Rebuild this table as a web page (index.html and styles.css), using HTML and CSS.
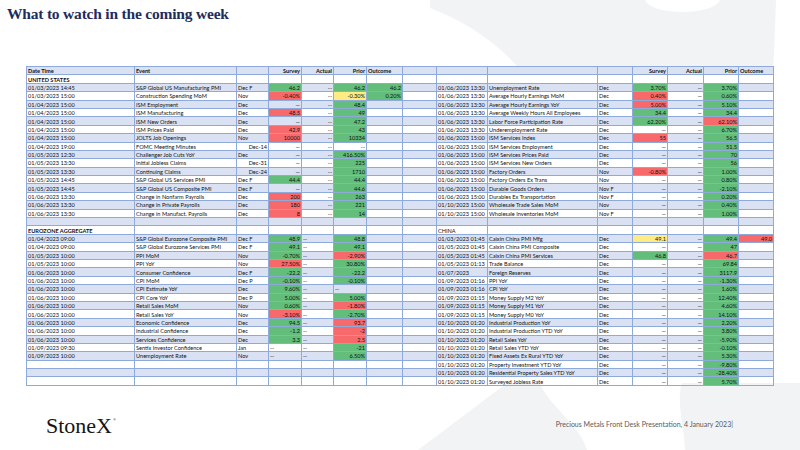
FILE: index.html
```html
<!DOCTYPE html>
<html lang="en">
<head>
<meta charset="utf-8">
<title>What to watch in the coming week</title>
<link rel="stylesheet" href="styles.css">
</head>
<body>
<h1 class="title">What to watch in the coming week</h1>
<table class="cal">
<colgroup>
<col style="width:108px"><col style="width:102px"><col style="width:32px"><col style="width:33px"><col style="width:32px"><col style="width:33px"><col style="width:36px"><col style="width:34px"><col style="width:51px"><col style="width:110px"><col style="width:35px"><col style="width:35px"><col style="width:36px"><col style="width:35px"><col style="width:35px">
</colgroup>
<tbody>
<tr class="h"><td>Date Time</td><td>Event</td><td></td><td>Survey</td><td>Actual</td><td>Prior</td><td class="l">Outcome</td><td></td><td></td><td></td><td></td><td>Survey</td><td>Actual</td><td>Prior</td><td class="l">Outcome</td></tr>
<tr><td class="b">UNITED STATES</td><td></td><td></td><td></td><td></td><td></td><td></td><td></td><td></td><td></td><td></td><td></td><td></td><td></td><td></td></tr>
<tr><td>01/03/2023 14:45</td><td>S&amp;P Global US Manufacturing PMI</td><td>Dec F</td><td class="g">46.2</td><td>--</td><td class="g">46.2</td><td class="g">46.2</td><td></td><td>01/06/2023 13:30</td><td>Unemployment Rate</td><td>Dec</td><td class="g">3.70%</td><td>—</td><td class="g">3.70%</td><td></td></tr>
<tr><td>01/03/2023 15:00</td><td>Construction Spending MoM</td><td>Nov</td><td class="r">-0.40%</td><td>--</td><td class="y">-0.30%</td><td class="g">0.20%</td><td></td><td>01/06/2023 13:30</td><td>Average Hourly Earnings MoM</td><td>Dec</td><td class="r">0.40%</td><td>—</td><td class="g">0.60%</td><td></td></tr>
<tr><td>01/04/2023 15:00</td><td>ISM Employment</td><td>Dec</td><td>—</td><td>--</td><td class="g">48.4</td><td></td><td></td><td>01/06/2023 13:30</td><td>Average Hourly Earnings YoY</td><td>Dec</td><td class="r">5.00%</td><td>—</td><td class="g">5.10%</td><td></td></tr>
<tr><td>01/04/2023 15:00</td><td>ISM Manufacturing</td><td>Dec</td><td class="r">48.5</td><td>--</td><td class="g">49</td><td></td><td></td><td>01/06/2023 13:30</td><td>Average Weekly Hours All Employees</td><td>Dec</td><td class="g">34.4</td><td>—</td><td class="g">34.4</td><td></td></tr>
<tr><td>01/04/2023 15:00</td><td>ISM New Orders</td><td>Dec</td><td>—</td><td>--</td><td class="g">47.2</td><td></td><td></td><td>01/06/2023 13:30</td><td>Labor Force Participation Rate</td><td>Dec</td><td class="g">62.20%</td><td>—</td><td class="r">62.10%</td><td></td></tr>
<tr><td>01/04/2023 15:00</td><td>ISM Prices Paid</td><td>Dec</td><td class="r">42.9</td><td>--</td><td class="g">43</td><td></td><td></td><td>01/06/2023 13:30</td><td>Underemployment Rate</td><td>Dec</td><td>—</td><td>—</td><td class="g">6.70%</td><td></td></tr>
<tr><td>01/04/2023 15:00</td><td>JOLTS Job Openings</td><td>Nov</td><td class="r">10000</td><td>--</td><td class="g">10334</td><td></td><td></td><td>01/06/2023 15:00</td><td>ISM Services Index</td><td>Dec</td><td class="r">55</td><td>—</td><td class="g">56.5</td><td></td></tr>
<tr><td>01/04/2023 19:00</td><td>FOMC Meeting Minutes</td><td class="n">Dec-14</td><td>—</td><td>--</td><td>--</td><td></td><td></td><td>01/06/2023 15:00</td><td>ISM Services Employment</td><td>Dec</td><td>—</td><td>—</td><td class="g">51.5</td><td></td></tr>
<tr><td>01/05/2023 12:30</td><td>Challenger Job Cuts YoY</td><td>Dec</td><td>—</td><td>--</td><td class="g">416.50%</td><td></td><td></td><td>01/06/2023 15:00</td><td>ISM Services Prices Paid</td><td>Dec</td><td>—</td><td>—</td><td class="g">70</td><td></td></tr>
<tr><td>01/05/2023 13:30</td><td>Initial Jobless Claims</td><td class="n">Dec-31</td><td>—</td><td>--</td><td class="g">225</td><td></td><td></td><td>01/06/2023 15:00</td><td>ISM Services New Orders</td><td>Dec</td><td>—</td><td>—</td><td class="g">56</td><td></td></tr>
<tr><td>01/05/2023 13:30</td><td>Continuing Claims</td><td class="n">Dec-24</td><td>—</td><td>--</td><td class="g">1710</td><td></td><td></td><td>01/06/2023 15:00</td><td>Factory Orders</td><td>Nov</td><td class="r">-0.80%</td><td>—</td><td class="g">1.00%</td><td></td></tr>
<tr><td>01/05/2023 14:45</td><td>S&amp;P Global US Services PMI</td><td>Dec F</td><td class="g">44.4</td><td>--</td><td class="g">44.4</td><td></td><td></td><td>01/06/2023 15:00</td><td>Factory Orders Ex Trans</td><td>Nov</td><td>—</td><td>—</td><td class="g">0.80%</td><td></td></tr>
<tr><td>01/05/2023 14:45</td><td>S&amp;P Global US Composite PMI</td><td>Dec F</td><td>—</td><td>--</td><td class="g">44.6</td><td></td><td></td><td>01/06/2023 15:00</td><td>Durable Goods Orders</td><td>Nov F</td><td>—</td><td>—</td><td class="g">-2.10%</td><td></td></tr>
<tr><td>01/06/2023 13:30</td><td>Change in Nonfarm Payrolls</td><td>Dec</td><td class="r">200</td><td>--</td><td class="g">263</td><td></td><td></td><td>01/06/2023 15:00</td><td>Durables Ex Transportation</td><td>Nov F</td><td>—</td><td>—</td><td class="g">0.20%</td><td></td></tr>
<tr><td>01/06/2023 13:30</td><td>Change in Private Payrolls</td><td>Dec</td><td class="r">180</td><td>--</td><td class="g">221</td><td></td><td></td><td>01/10/2023 15:00</td><td>Wholesale Trade Sales MoM</td><td>Nov</td><td>—</td><td>—</td><td class="g">0.40%</td><td></td></tr>
<tr><td>01/06/2023 13:30</td><td>Change in Manufact. Payrolls</td><td>Dec</td><td class="r">8</td><td>--</td><td class="g">14</td><td></td><td></td><td>01/10/2023 15:00</td><td>Wholesale Inventories MoM</td><td>Nov F</td><td>—</td><td>—</td><td class="g">1.00%</td><td></td></tr>
<tr><td></td><td></td><td></td><td></td><td></td><td></td><td></td><td></td><td></td><td></td><td></td><td></td><td></td><td></td><td></td></tr>
<tr><td class="b">EUROZONE AGGREGATE</td><td></td><td></td><td></td><td></td><td></td><td></td><td></td><td>CHINA</td><td></td><td></td><td></td><td></td><td></td><td></td></tr>
<tr><td>01/04/2023 09:00</td><td>S&amp;P Global Eurozone Composite PMI</td><td>Dec F</td><td class="g">48.9</td><td class="l">--</td><td class="g">48.8</td><td></td><td></td><td>01/03/2023 01:45</td><td>Caixin China PMI Mfg</td><td>Dec</td><td class="y">49.1</td><td>—</td><td class="g">49.4</td><td class="r">49.0</td></tr>
<tr><td>01/04/2023 09:00</td><td>S&amp;P Global Eurozone Services PMI</td><td>Dec F</td><td class="g">49.1</td><td class="l">--</td><td class="g">49.1</td><td></td><td></td><td>01/05/2023 01:45</td><td>Caixin China PMI Composite</td><td>Dec</td><td>—</td><td>—</td><td class="g">47</td><td></td></tr>
<tr><td>01/05/2023 10:00</td><td>PPI MoM</td><td>Nov</td><td class="g">-0.70%</td><td class="l">--</td><td class="r">-2.90%</td><td></td><td></td><td>01/05/2023 01:45</td><td>Caixin China PMI Services</td><td>Dec</td><td class="g">46.8</td><td>—</td><td class="r">46.7</td><td></td></tr>
<tr><td>01/05/2023 10:00</td><td>PPI YoY</td><td>Nov</td><td class="r">27.50%</td><td class="l">--</td><td class="g">30.80%</td><td></td><td></td><td>01/05/2023 01:13</td><td>Trade Balance</td><td>Dec</td><td>—</td><td>—</td><td class="g">69.84</td><td></td></tr>
<tr><td>01/06/2023 10:00</td><td>Consumer Confidence</td><td>Dec F</td><td class="g">-22.2</td><td class="l">--</td><td class="g">-22.2</td><td></td><td></td><td>01/07/2023</td><td>Foreign Reserves</td><td>Dec</td><td>—</td><td>—</td><td class="g">3117.9</td><td></td></tr>
<tr><td>01/06/2023 10:00</td><td>CPI MoM</td><td>Dec P</td><td class="g">-0.10%</td><td class="l">--</td><td class="g">-0.10%</td><td></td><td></td><td>01/09/2023 01:16</td><td>PPI YoY</td><td>Dec</td><td>—</td><td>—</td><td class="g">-1.30%</td><td></td></tr>
<tr><td>01/06/2023 10:00</td><td>CPI Estimate YoY</td><td>Dec</td><td class="g">9.60%</td><td class="l">--</td><td class="l">--</td><td></td><td></td><td>01/09/2023 01:16</td><td>CPI YoY</td><td>Dec</td><td>—</td><td>—</td><td class="g">1.60%</td><td></td></tr>
<tr><td>01/06/2023 10:00</td><td>CPI Core YoY</td><td>Dec P</td><td class="g">5.00%</td><td class="l">--</td><td class="g">5.00%</td><td></td><td></td><td>01/09/2023 01:15</td><td>Money Supply M2 YoY</td><td>Dec</td><td>—</td><td>—</td><td class="g">12.40%</td><td></td></tr>
<tr><td>01/06/2023 10:00</td><td>Retail Sales MoM</td><td>Nov</td><td class="g">0.60%</td><td class="l">--</td><td class="r">-1.80%</td><td></td><td></td><td>01/09/2023 01:15</td><td>Money Supply M1 YoY</td><td>Dec</td><td>—</td><td>—</td><td class="g">4.60%</td><td></td></tr>
<tr><td>01/06/2023 10:00</td><td>Retail Sales YoY</td><td>Nov</td><td class="r">-3.10%</td><td class="l">--</td><td class="g">-2.70%</td><td></td><td></td><td>01/09/2023 01:15</td><td>Money Supply M0 YoY</td><td>Dec</td><td>—</td><td>—</td><td class="g">14.10%</td><td></td></tr>
<tr><td>01/06/2023 10:00</td><td>Economic Confidence</td><td>Dec</td><td class="g">94.5</td><td class="l">--</td><td class="r">93.7</td><td></td><td></td><td>01/10/2023 01:20</td><td>Industrial Production YoY</td><td>Dec</td><td>—</td><td>—</td><td class="g">2.20%</td><td></td></tr>
<tr><td>01/06/2023 10:00</td><td>Industrial Confidence</td><td>Dec</td><td class="g">-1.2</td><td class="l">--</td><td class="r">-2</td><td></td><td></td><td>01/10/2023 01:20</td><td>Industrial Production YTD YoY</td><td>Dec</td><td>—</td><td>—</td><td class="g">3.80%</td><td></td></tr>
<tr><td>01/06/2023 10:00</td><td>Services Confidence</td><td>Dec</td><td class="g">3.3</td><td class="l">--</td><td class="r">2.5</td><td></td><td></td><td>01/10/2023 01:20</td><td>Retail Sales YoY</td><td>Dec</td><td>—</td><td>—</td><td class="g">-5.90%</td><td></td></tr>
<tr><td>01/09/2023 09:30</td><td>Sentix Investor Confidence</td><td>Jan</td><td class="l">--</td><td class="l">--</td><td class="g">-21</td><td></td><td></td><td>01/10/2023 01:20</td><td>Retail Sales YTD YoY</td><td>Dec</td><td>—</td><td>—</td><td class="g">-0.10%</td><td></td></tr>
<tr><td>01/09/2023 10:00</td><td>Unemployment Rate</td><td>Nov</td><td class="l">--</td><td class="l">--</td><td class="g">6.50%</td><td></td><td></td><td>01/10/2023 01:20</td><td>Fixed Assets Ex Rural YTD YoY</td><td>Dec</td><td>—</td><td>—</td><td class="g">5.30%</td><td></td></tr>
<tr><td></td><td></td><td></td><td></td><td></td><td></td><td></td><td></td><td>01/10/2023 01:20</td><td>Property Investment YTD YoY</td><td>Dec</td><td>—</td><td>—</td><td class="g">-9.80%</td><td></td></tr>
<tr><td></td><td></td><td></td><td></td><td></td><td></td><td></td><td></td><td>01/10/2023 01:20</td><td>Residential Property Sales YTD YoY</td><td>Dec</td><td>—</td><td>—</td><td class="g">-28.40%</td><td></td></tr>
<tr><td></td><td></td><td></td><td></td><td></td><td></td><td></td><td></td><td>01/10/2023 01:20</td><td>Surveyed Jobless Rate</td><td>Dec</td><td>—</td><td>—</td><td class="g">5.70%</td><td></td></tr>
</tbody>
</table>
<footer class="foot">
<div class="logo">StoneX<span class="reg">®</span></div>
<div class="note">Precious Metals Front Desk Presentation, 4 January 2023|</div>
</footer>
</body>
</html>
```

FILE: styles.css
```css
* { box-sizing: border-box; }
html, body { margin: 0; padding: 0; }
body {
  width: 800px;
  height: 450px;
  overflow: hidden;
  font-family: Lato, "Liberation Sans", sans-serif;
  background-color: #fff;
  background-repeat: no-repeat;
  background-position: 0 0;
  background-image: url("data:image/svg+xml;utf8,<svg xmlns='http://www.w3.org/2000/svg' width='800' height='450' viewBox='0 0 800 450'><g fill='%23f2f3f5'><path d='M430 0 H645 C652 16 713 16 720 0 H776 C775 30 774 55 773 70 H520 C498 42 462 20 430 8 Z'/><path d='M507 383 H540 C548 405 580 425 587 450 H418 Z'/><path d='M682 383 H800 V450 H685 C684 425 676 400 682 383 Z'/></g></svg>");
}
.title {
  margin: 0;
  height: 66px;
  padding: 5px 0 0 7px;
  font: bold 15.5px/17px "Liberation Serif", "Times New Roman", serif;
  letter-spacing: -0.2px;
  color: #1f2d5c;
}
.cal {
  margin-left: 26px;
  width: 747px;
  border-collapse: collapse;
  table-layout: fixed;
  font-size: 5.6px;
  color: #111;
  text-align: left;
}
.cal tr { height: 8.4px; }
.cal tr:nth-child(odd) { background: #d9e1f2; }
.cal td {
  border: 1px solid #8eaadb;
  padding: 0 1px;
  height: 8.4px;
  line-height: 7px;
  white-space: nowrap;
  overflow: hidden;
  vertical-align: middle;
}
.cal td:nth-child(n+4):nth-child(-n+7),
.cal td:nth-child(n+12) { text-align: right; }
.cal td.l:nth-child(n) { text-align: left; }
.cal td.n:nth-child(n) { text-align: right; }
.cal .g { background: #63be7b; }
.cal .r { background: #f8696b; }
.cal .y { background: #ffeb84; }
.cal .h td, .cal .b { font-weight: bold; }
.foot {
  display: flex;
  justify-content: space-between;
  align-items: flex-start;
  margin-top: 29px;
  padding: 0 67px 0 46px;
}
.logo {
  font: 22px/22px "Liberation Serif", "Times New Roman", serif;
  color: #151515;
}
.reg {
  font-size: 4px;
  vertical-align: top;
  line-height: 10px;
  margin-left: 1px;
}
.note {
  margin-top: 5px;
  font: 7px/9px Lato, "Liberation Sans", sans-serif;
  color: #5a5a5a;
}
```
